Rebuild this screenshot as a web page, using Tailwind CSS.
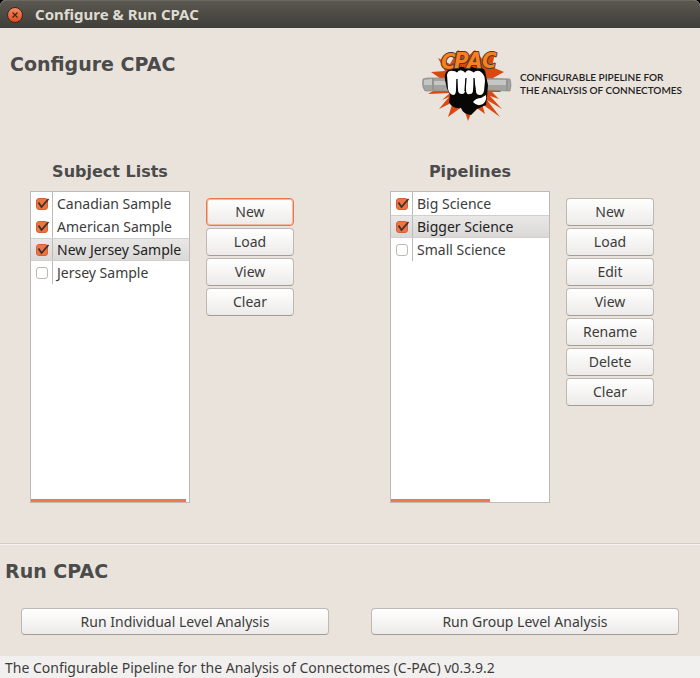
<!DOCTYPE html>
<html lang="en">
<head>
<meta charset="utf-8">
<meta name="viewport" content="width=device-width, initial-scale=1">
<title>Configure &amp; Run CPAC</title>
<script src="https://cdn.jsdelivr.net/npm/@tailwindcss/browser@4"></script>
</head>
<body class="bg-black">
<div class="flex min-h-screen flex-col bg-[#eae3dc] rounded-t-md font-['Noto_Sans',sans-serif] text-sm text-[#3c3c3c]">
  <header class="flex h-7 items-center gap-3 rounded-t-md border-t border-[#6b6860] bg-linear-to-b from-[#5a5850] to-[#3f3e39] px-[7px]">
    <button type="button" aria-label="Close" class="flex size-4 items-center justify-center rounded-full border border-[#3a2a22] bg-linear-to-b from-[#f58a63] to-[#df4b1c]">
      <svg class="size-2" viewBox="0 0 8 8" fill="none" stroke="#4a2415" stroke-width="1.3"><path d="M1.5 1.5l5 5M6.5 1.5l-5 5"/></svg>
    </button>
    <h1 class="text-[15px] font-bold text-[#dfdbd2]">Configure &amp; Run CPAC</h1>
  </header>

  <main class="flex flex-1 flex-col">
    <section class="flex flex-1 flex-col border-b border-[#d3ccc5] pb-10">
      <div class="flex items-start justify-between pt-5 pr-[14px] pl-[10px]">
        <h2 class="pt-1 font-['DejaVu_Sans',sans-serif] text-[19px] leading-6 font-bold text-[#4b4b4b]">Configure CPAC</h2>
        <div class="flex items-start gap-2">
          <svg class="h-[76px] w-[90px]" viewBox="7 8 90 76" role="img" aria-label="CPAC logo">
            <path fill="#d9480f" d="M23 18L35 24L43 10L52 17L60 10L68 20L80 13L77 27L89 32L78 38L86 52L77 52L84 59L75 56L87 69L72 60L85 77L67 64L70 74L59 66L53 81L48 66L33 77L38 62L24 69L34 57L27 60L35 53L13 54L30 44L29 41L16 32L30 31Z"/>
            <path fill="#a3a3a2" stroke="#868685" stroke-width=".7" d="M8 39l4-1h22v13H10q-4-5-2-12zM68 38l27 1q2 6 0 12l-27-1z"/>
            <path fill="#c6c6c5" d="M9 40l8-1v6H9zM19 41h15v4H19zM70 40h21v5H70z"/>
            <path stroke="#858584" fill="none" d="M18 38v12M92 39v12"/>
            <path fill="#090706" d="M32 31q4-5 9-2 5-4 9-1 5-3 10 0 8-2 10 3l3 14-1 12-1 8-9 4-6 6q-8-1-10-7-9 1-12-6l1-7q-4-7-5-15-1-6 2-9z"/>
            <g fill="#fff">
              <path d="M32 35q1-5 6-4 5 0 4 5l-1 14q0 5-3 5-4-1-5-6z"/>
              <path d="M41 33q3-4 7-2 3 1 2 5v14q0 4-3 4-4 0-4-4z"/>
              <path d="M50 33q2-4 6-2 4 1 3 5l-1 14q0 4-3 4-4 1-4-4z"/>
              <path d="M58 33q4-4 8-1 4 3 4 9l-1 10q-1 4-4 4-4 0-4-4z"/>
              <path d="M36 33h29v6H36z"/>
              <path d="M58 62q3-4 8-4l5-3q1 6-3 9-6 3-10-2z"/>
            </g>
            <path fill="none" stroke="#090706" stroke-width="1.3" d="M42 39v12M51 38l-1 13M59 38l1 14M43 29l-1 3M51 29v2M59 29v2"/>
            <text x="26 39 52 67" y="29 28 28 28" font-family="'DejaVu Sans Condensed', 'Liberation Sans', sans-serif" font-size="22" font-weight="bold" font-style="italic" fill="#f9801e" stroke="#4a3830" stroke-width="2" paint-order="stroke" stroke-linejoin="round">CPAC</text>
          </svg>
          <p class="w-[166px] pt-[23px] font-[Lato,sans-serif] text-[10px] leading-[13px] font-semibold whitespace-nowrap text-[#222]">CONFIGURABLE PIPELINE FOR<br>THE ANALYSIS OF CONNECTOMES</p>
        </div>
      </div>

      <div class="grid flex-1 grid-cols-2 gap-5 pt-9">
        <div class="flex gap-4 pl-[30px]">
          <div class="flex w-40 flex-col">
            <h3 class="pb-[7px] text-center font-['DejaVu_Sans',sans-serif] text-base leading-6 font-bold text-[#4b4b4b]">Subject Lists</h3>
            <div class="flex flex-1 flex-col justify-between border border-[#bdbbb8] bg-white">
              <ul>
                <li><label class="flex h-[23px] items-center overflow-hidden pl-[5px] whitespace-nowrap"><span class="grid w-4 shrink-0 items-center"><input type="checkbox" checked class="peer col-start-1 row-start-1 size-3 appearance-none rounded-[3px] border border-[#bdb8b2] bg-white checked:border-[#d9602f] checked:bg-[#ee7443]"><svg class="invisible col-start-1 row-start-1 h-3 w-[14px] peer-checked:visible" viewBox="0 0 14 12" fill="none" stroke="#3a3330" stroke-width="1.8"><path d="M2.500 4.500l3 4.500 7-8"/></svg></span><span class="flex h-full items-center border-l border-[#bbb] pl-1">Canadian Sample</span></label></li>
                <li><label class="flex h-[23px] items-center overflow-hidden pl-[5px] whitespace-nowrap"><span class="grid w-4 shrink-0 items-center"><input type="checkbox" checked class="peer col-start-1 row-start-1 size-3 appearance-none rounded-[3px] border border-[#bdb8b2] bg-white checked:border-[#d9602f] checked:bg-[#ee7443]"><svg class="invisible col-start-1 row-start-1 h-3 w-[14px] peer-checked:visible" viewBox="0 0 14 12" fill="none" stroke="#3a3330" stroke-width="1.8"><path d="M2.500 4.500l3 4.500 7-8"/></svg></span><span class="flex h-full items-center border-l border-[#bbb] pl-1">American Sample</span></label></li>
                <li class="border-y border-[#d0cfce] bg-linear-to-b from-[#e9e8e7] to-[#dad9d8] text-[#222]"><label class="flex h-[21px] items-center overflow-hidden pl-[5px] whitespace-nowrap"><span class="grid w-4 shrink-0 items-center"><input type="checkbox" checked class="peer col-start-1 row-start-1 size-3 appearance-none rounded-[3px] border border-[#bdb8b2] bg-white checked:border-[#d9602f] checked:bg-[#ee7443]"><svg class="invisible col-start-1 row-start-1 h-3 w-[14px] peer-checked:visible" viewBox="0 0 14 12" fill="none" stroke="#3a3330" stroke-width="1.8"><path d="M2.500 4.500l3 4.500 7-8"/></svg></span><span class="flex h-full items-center border-l border-[#bbb] pl-1">New Jersey Sample</span></label></li>
                <li><label class="flex h-[23px] items-center overflow-hidden pl-[5px] whitespace-nowrap"><span class="grid w-4 shrink-0 items-center"><input type="checkbox" class="peer col-start-1 row-start-1 size-3 appearance-none rounded-[3px] border border-[#bdb8b2] bg-white checked:border-[#d9602f] checked:bg-[#ee7443]"><svg class="invisible col-start-1 row-start-1 h-3 w-[14px] peer-checked:visible" viewBox="0 0 14 12" fill="none" stroke="#3a3330" stroke-width="1.8"><path d="M2.500 4.500l3 4.500 7-8"/></svg></span><span class="flex h-full items-center border-l border-[#bbb] pl-1">Jersey Sample</span></label></li>
              </ul>
              <div class="h-[3px] w-[155px] bg-[#ec7b4c]"></div>
            </div>
          </div>
          <div class="flex w-[88px] flex-col gap-[2px] pt-[38px]">
            <button type="button" class="h-7 rounded border border-[#e9764c] bg-linear-to-b from-white to-[#edebe9] inset-ring inset-ring-[#f5b9a0]">New</button>
            <button type="button" class="h-7 rounded border border-[#bdb8b3] border-b-[#a19c97] bg-linear-to-b from-white to-[#edebe9]">Load</button>
            <button type="button" class="h-7 rounded border border-[#bdb8b3] border-b-[#a19c97] bg-linear-to-b from-white to-[#edebe9]">View</button>
            <button type="button" class="h-7 rounded border border-[#bdb8b3] border-b-[#a19c97] bg-linear-to-b from-white to-[#edebe9]">Clear</button>
          </div>
        </div>

        <div class="flex gap-4 pl-[30px]">
          <div class="flex w-40 flex-col">
            <h3 class="pb-[7px] text-center font-['DejaVu_Sans',sans-serif] text-base leading-6 font-bold text-[#4b4b4b]">Pipelines</h3>
            <div class="flex flex-1 flex-col justify-between border border-[#bdbbb8] bg-white">
              <ul>
                <li><label class="flex h-[23px] items-center overflow-hidden pl-[5px] whitespace-nowrap"><span class="grid w-4 shrink-0 items-center"><input type="checkbox" checked class="peer col-start-1 row-start-1 size-3 appearance-none rounded-[3px] border border-[#bdb8b2] bg-white checked:border-[#d9602f] checked:bg-[#ee7443]"><svg class="invisible col-start-1 row-start-1 h-3 w-[14px] peer-checked:visible" viewBox="0 0 14 12" fill="none" stroke="#3a3330" stroke-width="1.8"><path d="M2.500 4.500l3 4.500 7-8"/></svg></span><span class="flex h-full items-center border-l border-[#bbb] pl-1">Big Science</span></label></li>
                <li class="border-y border-[#d0cfce] bg-linear-to-b from-[#e9e8e7] to-[#dad9d8] text-[#222]"><label class="flex h-[21px] items-center overflow-hidden pl-[5px] whitespace-nowrap"><span class="grid w-4 shrink-0 items-center"><input type="checkbox" checked class="peer col-start-1 row-start-1 size-3 appearance-none rounded-[3px] border border-[#bdb8b2] bg-white checked:border-[#d9602f] checked:bg-[#ee7443]"><svg class="invisible col-start-1 row-start-1 h-3 w-[14px] peer-checked:visible" viewBox="0 0 14 12" fill="none" stroke="#3a3330" stroke-width="1.8"><path d="M2.500 4.500l3 4.500 7-8"/></svg></span><span class="flex h-full items-center border-l border-[#bbb] pl-1">Bigger Science</span></label></li>
                <li><label class="flex h-[23px] items-center overflow-hidden pl-[5px] whitespace-nowrap"><span class="grid w-4 shrink-0 items-center"><input type="checkbox" class="peer col-start-1 row-start-1 size-3 appearance-none rounded-[3px] border border-[#bdb8b2] bg-white checked:border-[#d9602f] checked:bg-[#ee7443]"><svg class="invisible col-start-1 row-start-1 h-3 w-[14px] peer-checked:visible" viewBox="0 0 14 12" fill="none" stroke="#3a3330" stroke-width="1.8"><path d="M2.500 4.500l3 4.500 7-8"/></svg></span><span class="flex h-full items-center border-l border-[#bbb] pl-1">Small Science</span></label></li>
              </ul>
              <div class="h-[3px] w-[99px] bg-[#ec7b4c]"></div>
            </div>
          </div>
          <div class="flex w-[88px] flex-col gap-[2px] pt-[38px]">
            <button type="button" class="h-7 rounded border border-[#bdb8b3] border-b-[#a19c97] bg-linear-to-b from-white to-[#edebe9]">New</button>
            <button type="button" class="h-7 rounded border border-[#bdb8b3] border-b-[#a19c97] bg-linear-to-b from-white to-[#edebe9]">Load</button>
            <button type="button" class="h-7 rounded border border-[#bdb8b3] border-b-[#a19c97] bg-linear-to-b from-white to-[#edebe9]">Edit</button>
            <button type="button" class="h-7 rounded border border-[#bdb8b3] border-b-[#a19c97] bg-linear-to-b from-white to-[#edebe9]">View</button>
            <button type="button" class="h-7 rounded border border-[#bdb8b3] border-b-[#a19c97] bg-linear-to-b from-white to-[#edebe9]">Rename</button>
            <button type="button" class="h-7 rounded border border-[#bdb8b3] border-b-[#a19c97] bg-linear-to-b from-white to-[#edebe9]">Delete</button>
            <button type="button" class="h-7 rounded border border-[#bdb8b3] border-b-[#a19c97] bg-linear-to-b from-white to-[#edebe9]">Clear</button>
          </div>
        </div>
      </div>
    </section>

    <section class="border-t border-[#f6f2ee] pt-[14px] pb-[21px]">
      <h2 class="pl-[5px] font-['DejaVu_Sans',sans-serif] text-[19px] leading-6 font-bold text-[#4b4b4b]">Run CPAC</h2>
      <div class="grid grid-cols-2 gap-[42px] px-[21px] pt-[25px]">
        <button type="button" class="h-[27px] rounded border border-[#bdb8b3] border-b-[#a19c97] bg-linear-to-b from-white to-[#edebe9]">Run Individual Level Analysis</button>
        <button type="button" class="h-[27px] rounded border border-[#bdb8b3] border-b-[#a19c97] bg-linear-to-b from-white to-[#edebe9]">Run Group Level Analysis</button>
      </div>
    </section>
  </main>

  <footer class="h-[22px] bg-[#f2f0ee] px-[5px] leading-6">The Configurable Pipeline for the Analysis of Connectomes (C-PAC) v0.3.9.2</footer>
</div>
</body>
</html>
